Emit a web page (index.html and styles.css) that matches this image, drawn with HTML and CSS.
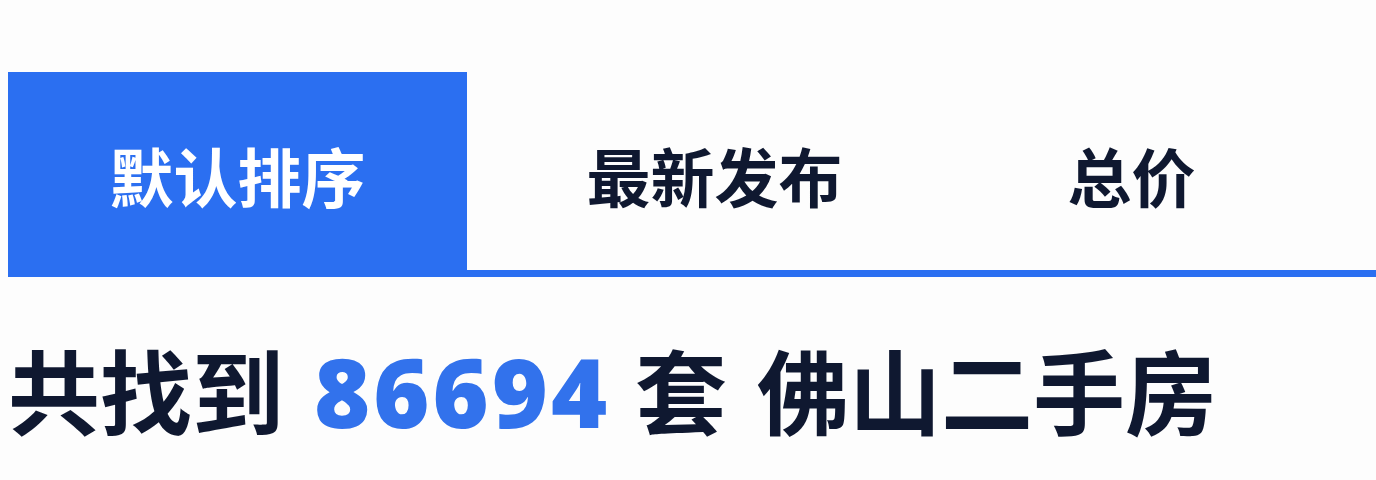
FILE: index.html
```html
<!DOCTYPE html>
<html lang="zh-CN">
<head>
<meta charset="utf-8">
<link rel="stylesheet" href="styles.css">
</head>
<body>
<div class="tabs">
  <div class="tab tab-default active">默认排序</div>
  <div class="tab tab-new">最新发布</div>
  <div class="tab tab-price">总价</div>
</div>
<h1 class="result">共找到 <span class="count">86694</span> 套 佛山二手房</h1>
</body>
</html>
```
FILE: styles.css
```css
html, body {
  margin: 0;
  padding: 0;
  background: #fdfdfd;
}
body {
  font-family: "Noto Sans CJK SC", "Noto Sans", sans-serif;
  color: #0f1830;
  width: 1376px;
  height: 480px;
  overflow: hidden;
}
.tabs {
  display: flex;
  margin: 72px 0 0 8px;
  height: 198px;
  border-bottom: 7px solid #2b6ff1;
}
.tab {
  display: flex;
  align-items: center;
  justify-content: center;
  font-size: 64px;
  font-weight: 700;
  line-height: 1;
  padding-top: 6px;
  box-sizing: border-box;
}
.tab-default { width: 459px; }
.tab-new { width: 495px; }
.tab-price { width: 339px; }
.active {
  background: #2b6ff1;
  color: #ffffff;
}
.result {
  margin: 65px 0 0 8px;
  font-size: 92px;
  font-weight: 700;
  line-height: 1;
  white-space: nowrap;
  word-spacing: 9px;
}
.count {
  font-family: "Open Sans", "Noto Sans", sans-serif;
  font-weight: 800;
  font-size: 96px;
  letter-spacing: 3px;
  margin-right: -5px;
  color: #3272ec;
}
```
